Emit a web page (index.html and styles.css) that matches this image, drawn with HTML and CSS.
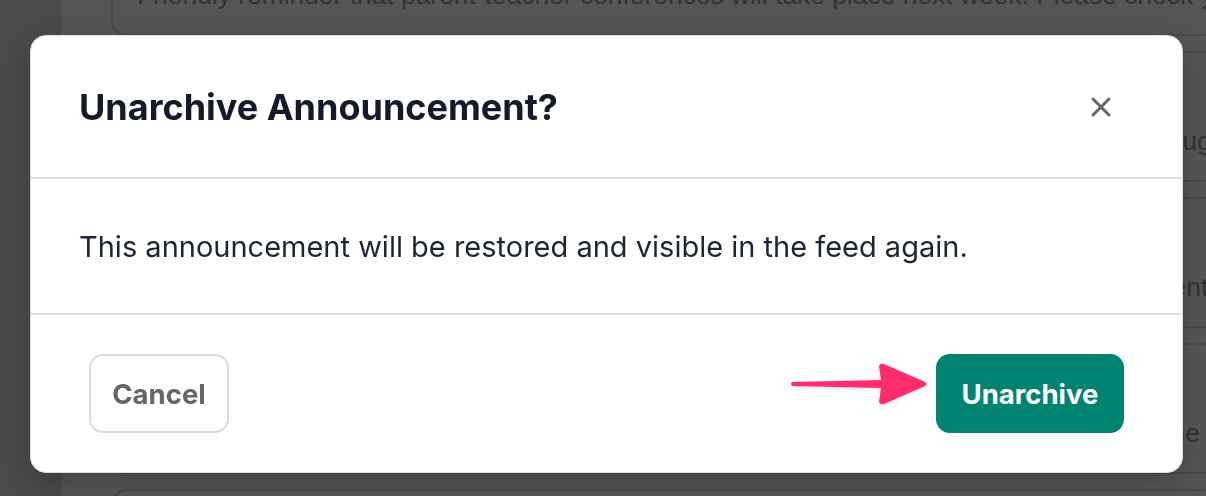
FILE: index.html
```html
<!DOCTYPE html>
<html lang="en">
<head>
    <meta charset="UTF-8">
    <meta name="viewport" content="width=device-width, initial-scale=1.0">
    <title>Announcements</title>
    <link rel="stylesheet" href="styles.css">
</head>
<body>
    <div class="app">
        <aside class="sidebar"></aside>
        <main class="feed">
            <article class="card">
                <p>Friendly reminder that parent-teacher conferences will take place next week. Please check your email for the schedule.</p>
            </article>
            <article class="card">
                <p>School library will be closed for inventory this Sunday. Please return borrowed books by August 30.</p>
            </article>
            <article class="card">
                <p>Spring picture day is next Thursday. Order forms were sent home last week with the students.</p>
            </article>
            <article class="card">
                <p>Our science fair is this Wednesday evening. All families are welcome to view projects in the auditorium.</p>
            </article>
            <article class="card">
                <p>Lunch menus for next month are now available online.</p>
            </article>
        </main>
    </div>

    <div class="overlay">
        <div class="modal" role="dialog" aria-labelledby="modal-title">
            <header class="modal-header">
                <h2 id="modal-title">Unarchive Announcement?</h2>
                <button class="close-btn" aria-label="Close">
                    <svg viewBox="0 0 20 20" width="20" height="20">
                        <path d="M2 2 L18 18 M18 2 L2 18" stroke="currentColor" stroke-width="3" stroke-linecap="round" fill="none"/>
                    </svg>
                </button>
            </header>

            <div class="modal-body">
                <p>This announcement will be restored and visible in the feed again.</p>
            </div>

            <footer class="modal-footer">
                <button class="btn btn-cancel">Cancel</button>
                <div class="primary-wrap">
                    <svg class="pointer-arrow" viewBox="0 0 138 46" width="138" height="46">
                        <path d="M2 21 L91 19 L89 5 Q90 2 94 3 L135 21 Q138 23 135 25 L94 43 Q90 44 89 41 L91 27 L2 25 Q0 23 2 21 Z" fill="#ff2d6a"/>
                    </svg>
                    <button class="btn btn-primary">Unarchive</button>
                </div>
            </footer>
        </div>
    </div>
</body>
</html>
```

FILE: styles.css
```css
* {
    box-sizing: border-box;
    margin: 0;
    padding: 0;
}

body {
    font-family: 'Inter', 'Noto Sans', sans-serif;
    background: #555;
    height: 100vh;
    overflow: hidden;
}

/* dimmed page behind the dialog */

.app {
    display: flex;
    height: 100vh;
}

.sidebar {
    width: 62px;
    flex-shrink: 0;
    background: #4b4b4b;
}

.feed {
    flex: 1;
    min-width: 0;
    margin-top: -95px;
    padding-left: 49px;
    display: flex;
    flex-direction: column;
    gap: 15px;
}

.card {
    flex-shrink: 0;
    height: 131px;
    margin-right: -40px;
    border: 2px solid #4a4a4a;
    border-radius: 16px;
    padding: 0 0 24px 24px;
    display: flex;
    align-items: flex-end;
    overflow: hidden;
}

.card p {
    font-family: 'Liberation Sans', Arial, sans-serif;
    font-size: 26.4px;
    line-height: 30px;
    color: #333;
    white-space: nowrap;
}

/* dialog */

.overlay {
    position: fixed;
    inset: 0;
    padding: 35px 23px 0 30px;
}

.modal {
    background: #fff;
    border: 1px solid #dcdce1;
    border-radius: 16px;
    box-shadow: 0 10px 30px rgba(0, 0, 0, 0.2);
}

.modal-header {
    height: 143px;
    padding: 0 71px 0 48px;
    display: flex;
    align-items: center;
    justify-content: space-between;
    border-bottom: 2px solid #dedede;
}

.modal-header h2 {
    font-size: 36px;
    font-weight: 700;
    color: #141a2a;
}

.close-btn {
    width: 20px;
    height: 20px;
    border: none;
    background: none;
    color: #666;
    cursor: pointer;
    display: flex;
}

.modal-body {
    height: 136px;
    padding: 0 48px;
    display: flex;
    align-items: center;
    border-bottom: 2px solid #dedede;
}

.modal-body p {
    font-size: 29px;
    color: #1d2433;
}

.modal-footer {
    padding: 39px 58px 39px;
    display: flex;
    align-items: center;
    justify-content: space-between;
}

.btn {
    height: 79px;
    border-radius: 14px;
    font-family: 'Inter', 'Noto Sans', sans-serif;
    font-size: 27.5px;
    font-weight: 700;
    cursor: pointer;
}

.btn-cancel {
    width: 140px;
    background: #fff;
    border: 2px solid #dcdcdc;
    color: #666;
}

.btn-primary {
    width: 188px;
    background: #00846f;
    border: none;
    color: #fff;
}

.primary-wrap {
    position: relative;
}

.pointer-arrow {
    position: absolute;
    right: calc(100% + 8px);
    top: 7px;
    filter: drop-shadow(0 1px 2px rgba(0, 0, 0, 0.15));
}
```
